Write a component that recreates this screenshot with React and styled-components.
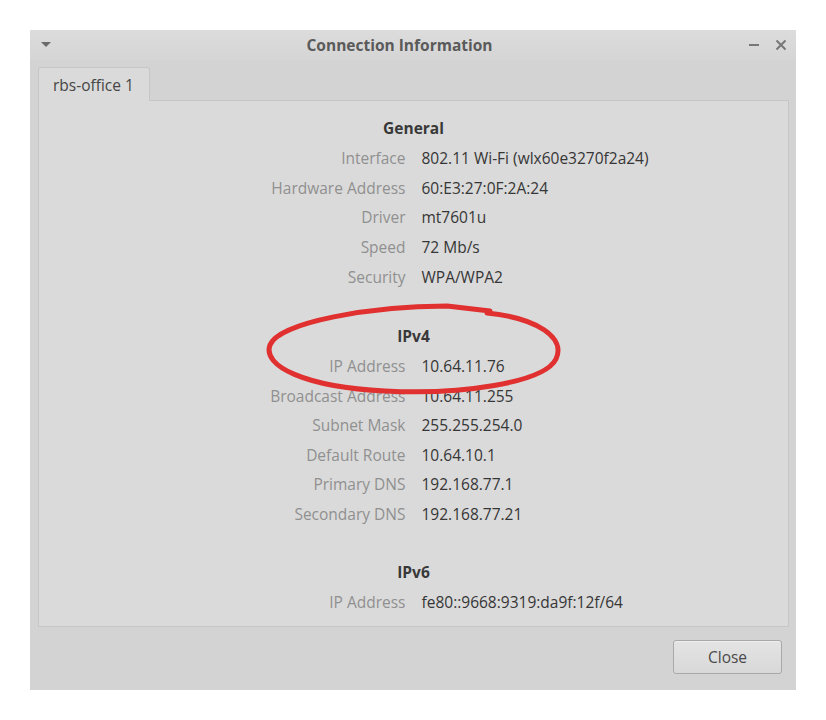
import React from 'react';
import styled, { createGlobalStyle } from 'styled-components';

const GlobalStyle = createGlobalStyle`
    body {
        margin: 0;
        background: #ffffff;
        font-family: "Open Sans", "Noto Sans", sans-serif;
    }
`;

const Page = styled.div`
    position: relative;
    width: 826px;
    height: 720px;
    padding: 30px 30px 30px 30px;
    box-sizing: border-box;
`;

const Window = styled.div`
    width: 766px;
    height: 660px;
    background: #d3d3d3;
    display: flex;
    flex-direction: column;
`;

// Title bar with the menu arrow, title and window buttons
const TitleBar = styled.div`
    height: 30px;
    display: grid;
    grid-template-columns: 40px 1fr 67px;
    align-items: center;
    background: linear-gradient(#dcdcdc, #d5d5d5);
`;

const MenuArrow = styled.div`
    padding-left: 11px;
    display: flex;
    align-items: center;
`;

const Title = styled.div`
    text-align: center;
    font-size: 15.5px;
    font-weight: 700;
    color: #5a5a5a;
    white-space: nowrap;
`;

const WinButtons = styled.div`
    display: flex;
    justify-content: flex-end;
    align-items: center;
    gap: 15px;
    padding-right: 9px;
`;

const TabStrip = styled.div`
    display: flex;
    padding: 7px 7px 0 8px;
`;

const Tab = styled.div`
    width: 112px;
    height: 34px;
    box-sizing: border-box;
    background: #dadada;
    border: 1px solid #c6c6c6;
    border-bottom: none;
    border-radius: 3px 3px 0 0;
    display: flex;
    align-items: center;
    padding-left: 14px;
    font-size: 15.5px;
    color: #464646;
`;

const TabFill = styled.div`
    flex: 1;
    border-bottom: 1px solid #c6c6c6;
`;

const Panel = styled.div`
    margin: 0 7px 0 8px;
    height: 526px;
    box-sizing: border-box;
    background: #dadada;
    border: 1px solid #c6c6c6;
    border-top: none;
    padding-top: 12px;
`;

const Section = styled.div`
    display: grid;
    grid-template-columns: 1fr 1fr;
    column-gap: 16px;
    margin-bottom: ${props => props.gap}px;
`;

const Heading = styled.div`
    grid-column: 1 / 3;
    text-align: center;
    font-size: 15.5px;
    font-weight: 700;
    color: #383838;
    height: 31px;
    line-height: 30px;
`;

const Label = styled.div`
    text-align: right;
    font-size: 15.5px;
    color: #909090;
    height: ${props => props.h}px;
    line-height: ${props => props.h}px;
    white-space: nowrap;
`;

const Value = styled.div`
    text-align: left;
    font-size: 15.5px;
    color: #363636;
    height: ${props => props.h}px;
    line-height: ${props => props.h}px;
    white-space: nowrap;
`;

const ButtonRow = styled.div`
    flex: 1;
    display: flex;
    justify-content: flex-end;
    align-items: flex-start;
    padding: 13px 14px 0 0;
`;

const Button = styled.button`
    width: 109px;
    height: 34px;
    border: 1px solid #a9a9a9;
    border-radius: 3px;
    background: linear-gradient(#e4e4e4, #d8d8d8);
    box-shadow: inset 0 1px 0 #eeeeee;
    font-family: "Open Sans", "Noto Sans", sans-serif;
    font-size: 15.5px;
    color: #4a4a4a;
`;

const Annotation = styled.svg`
    position: absolute;
    left: 0;
    top: 0;
    pointer-events: none;
`;

const sections = [
    {
        title: 'General',
        gap: 28.5,
        rowHeight: 29.7,
        rows: [
            ['Interface', '802.11 Wi-Fi (wlx60e3270f2a24)'],
            ['Hardware Address', '60:E3:27:0F:2A:24'],
            ['Driver', 'mt7601u'],
            ['Speed', '72 Mb/s'],
            ['Security', 'WPA/WPA2'],
        ],
    },
    {
        title: 'IPv4',
        gap: 27,
        rowHeight: 29.6,
        rows: [
            ['IP Address', '10.64.11.76'],
            ['Broadcast Address', '10.64.11.255'],
            ['Subnet Mask', '255.255.254.0'],
            ['Default Route', '10.64.10.1'],
            ['Primary DNS', '192.168.77.1'],
            ['Secondary DNS', '192.168.77.21'],
        ],
    },
    {
        title: 'IPv6',
        gap: 0,
        rowHeight: 29.6,
        rows: [
            ['IP Address', 'fe80::9668:9319:da9f:12f/64'],
        ],
    },
];

export default function App() {
    return (
        <Page>
            <GlobalStyle />
            <Window>
                <TitleBar>
                    <MenuArrow>
                        <svg width="10" height="6" viewBox="0 0 10 6">
                            <path d="M0 0 L10 0 L5 5 Z" fill="#6a6a6a" />
                        </svg>
                    </MenuArrow>
                    <Title>Connection Information</Title>
                    <WinButtons>
                        <svg width="12" height="12" viewBox="0 0 12 12">
                            <rect x="1" y="5" width="10" height="2" fill="#777" />
                        </svg>
                        <svg width="12" height="12" viewBox="0 0 12 12">
                            <path d="M1.5 1.5 L10.5 10.5 M10.5 1.5 L1.5 10.5" stroke="#777" strokeWidth="2" />
                        </svg>
                    </WinButtons>
                </TitleBar>
                <TabStrip>
                    <Tab>rbs-office 1</Tab>
                    <TabFill />
                </TabStrip>
                <Panel>
                    {sections.map(s => (
                        <Section key={s.title} gap={s.gap}>
                            <Heading>{s.title}</Heading>
                            {s.rows.map(([l, v]) => (
                                <React.Fragment key={l}>
                                    <Label h={s.rowHeight}>{l}</Label>
                                    <Value h={s.rowHeight}>{v}</Value>
                                </React.Fragment>
                            ))}
                        </Section>
                    ))}
                </Panel>
                <ButtonRow>
                    <Button>Close</Button>
                </ButtonRow>
            </Window>
            <Annotation width="826" height="720" viewBox="0 0 826 720">
                <path
                    d="M487 313 C538 318 566 338 556 359 C544 383 460 395 385 391 C305 387 262 366 270 345 C279 322 372 306 447 306 L490 311"
                    fill="none"
                    stroke="#e0302f"
                    strokeWidth="5"
                    strokeLinecap="round"
                    strokeLinejoin="round"
                />
            </Annotation>
        </Page>
    );
}
